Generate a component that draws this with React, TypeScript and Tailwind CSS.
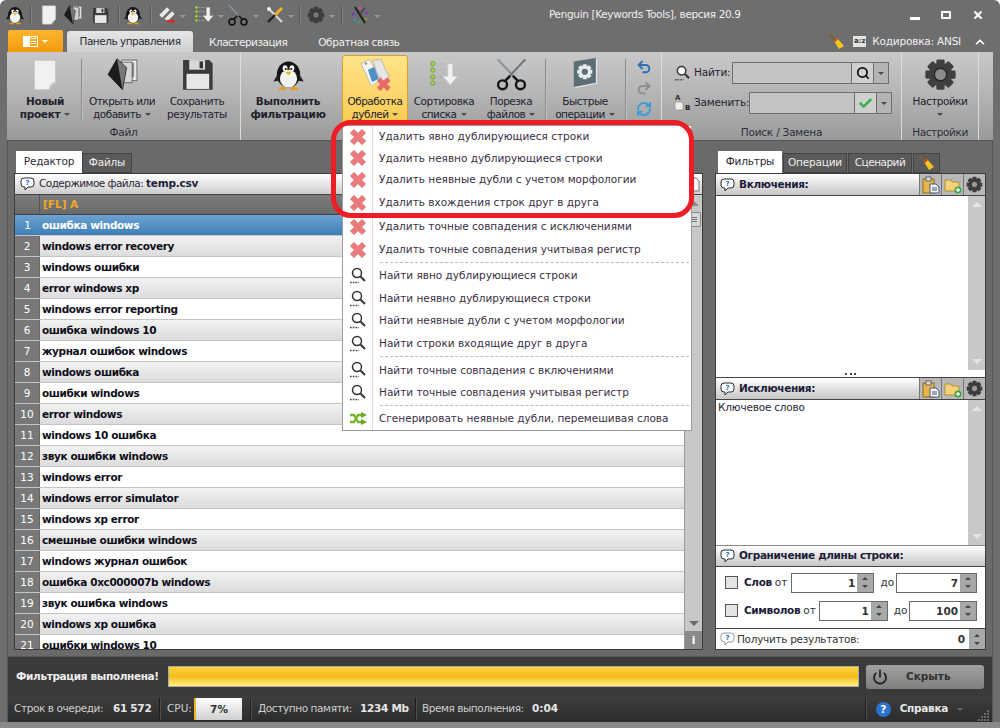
import { Check, ChevronUp, Power, Redo2, RefreshCw, Search, Undo2, X } from "lucide-react";

const rows = [
  "ошибка windows", "windows error recovery", "windows ошибки", "error windows xp", "windows error reporting",
  "ошибка windows 10", "журнал ошибок windows", "windows ошибка", "ошибки windows", "error windows",
  "windows 10 ошибка", "звук ошибки windows", "windows error", "windows error simulator", "windows xp error",
  "смешные ошибки windows", "windows журнал ошибок", "ошибка 0xc000007b windows", "звук ошибка windows",
  "windows xp ошибка", "ошибки windows 10",
];

const Caret = ({ color = "border-t-[#4a4a4a]" }: { color?: string }) => (
  <span className={`inline-block w-0 h-0 border-x-[3px] border-t-[3px] border-x-transparent ${color}`} />
);

const Penguin = ({ size = 48 }: { size?: number }) => (
  <svg width={size} height={size} viewBox="0 0 48 48">
    <ellipse cx="24" cy="24" rx="17" ry="19" fill="#141414" />
    <path d="M8 24 L2 34 L10 33Z M40 24 L46 34 L38 33Z" fill="#222" />
    <ellipse cx="24" cy="30" rx="12.5" ry="13" fill="#f2f2ee" />
    <ellipse cx="19" cy="15" rx="3.5" ry="4.5" fill="#fff" />
    <ellipse cx="29" cy="15" rx="3.5" ry="4.5" fill="#fff" />
    <circle cx="20" cy="16" r="1.5" fill="#111" />
    <circle cx="28" cy="16" r="1.5" fill="#111" />
    <path d="M19 20 L29 20 L24 25Z" fill="#f2b01e" />
    <path d="M10 44 Q15 40 21 44 L21 46 L10 46Z M27 44 Q33 40 38 44 L38 46 L27 46Z" fill="#ef9a14" />
  </svg>
);

const DocIcon = ({ size = 48 }: { size?: number }) => (
  <svg width={size} height={size} viewBox="0 0 48 48">
    <path d="M8 2 H38 Q40 2 40 4 V34 L30 46 H10 Q8 46 8 44Z" fill="#f1f1f1" stroke="#bdbdbd" />
    <path d="M40 34 L30 46 Q30 36 40 34Z" fill="#c9c9c9" />
  </svg>
);

const OpenIcon = ({ size = 48 }: { size?: number }) => (
  <svg width={size} height={size} viewBox="0 0 48 48">
    <rect x="23" y="3" width="22" height="30" fill="#e8e8e8" stroke="#444" />
    <rect x="27" y="7" width="14" height="21" fill="#8f8f8f" />
    <rect x="16" y="6" width="22" height="30" fill="#d4d4d4" stroke="#444" />
    <path d="M16 1 L30 14 L24 46 L3 24Z" fill="#787878" stroke="#111" />
    <path d="M16 1 L24 46 L3 24Z" fill="#1c1c1c" />
  </svg>
);

const FloppyIcon = ({ size = 48 }: { size?: number }) => (
  <svg width={size} height={size} viewBox="0 0 48 48">
    <path d="M3 3 H41 L46 8 V46 H3Z" fill="#3b3b3b" />
    <rect x="12" y="3" width="23" height="14" fill="#d9d9d9" />
    <rect x="27" y="5" width="5" height="10" fill="#333" />
    <rect x="8" y="23" width="33" height="22" fill="#e8e8e8" />
  </svg>
);

const TagsIcon = ({ size = 48 }: { size?: number }) => (
  <svg width={size} height={size} viewBox="0 0 48 48">
    <path d="M20 3 L32 2 L44 28 L30 36Z" fill="#e6e6e6" stroke="#a8a8a8" />
    <path d="M3 8 L15 2 L32 31 L18 41Z" fill="#f5f5f5" stroke="#a8a8a8" />
    <circle cx="10" cy="8" r="2" fill="#999" />
    <path d="M13 17 L22 13 L29 30 L19 35Z" fill="#4e8fc7" />
    <path d="M26 33 L31 28 L36 33 L41 28 L46 33 L41 38 L46 43 L41 48 L36 43 L31 48 L26 43 L31 38Z" fill="#e8696b" />
  </svg>
);

const TagsMinus = ({ size = 18 }: { size?: number }) => (
  <svg width={size} height={size} viewBox="0 0 18 18">
    <path d="M1 9 L9 1 L12 4 L4 12Z M6 13 L14 5 L17 8 L10 15Z" fill="#e9e9e9" stroke="#777" strokeWidth="0.6" />
    <rect x="9" y="14" width="8" height="2.5" fill="#d8282c" />
  </svg>
);

const SortIcon = ({ size = 48 }: { size?: number }) => (
  <svg width={size} height={size} viewBox="0 0 48 48">
    {[6, 16, 27, 37].map((y) => (
      <g key={y}>
        <circle cx="6" cy={y} r="3.5" fill="#a6ce4f" stroke="#5f8a25" />
        <path d={`M12 ${y} H26`} stroke="#b0b0b0" strokeWidth="2" strokeDasharray="3 2" />
      </g>
    ))}
    <path d="M30 6 H38 V26 H46 L34 40 L22 26 H30Z" fill="#f2f2f2" stroke="#c2c2c2" />
  </svg>
);

const ScissorsIcon = ({ size = 48 }: { size?: number }) => (
  <svg width={size} height={size} viewBox="0 0 48 48">
    <path d="M4 2 L32 32" stroke="#8a949c" strokeWidth="3" />
    <path d="M44 2 L16 32" stroke="#6c757c" strokeWidth="3" />
    <circle cx="11" cy="39" r="6.5" fill="none" stroke="#141414" strokeWidth="3.5" />
    <circle cx="37" cy="39" r="6.5" fill="none" stroke="#141414" strokeWidth="3.5" />
    <path d="M15 33 L22 26 M33 33 L26 26" stroke="#141414" strokeWidth="3.5" />
  </svg>
);

const ToolsIcon = ({ size = 18 }: { size?: number }) => (
  <svg width={size} height={size} viewBox="0 0 18 18">
    <path d="M2 2 L16 16" stroke="#d9d9d9" strokeWidth="2" />
    <path d="M16 2 L9 9" stroke="#f0b429" strokeWidth="3" />
    <path d="M9 9 L2 16" stroke="#222" strokeWidth="2.4" />
    <circle cx="3" cy="3" r="2" fill="#eee" />
  </svg>
);

const ColorIcon = ({ size = 20 }: { size?: number }) => (
  <svg width={size} height={size} viewBox="0 0 20 20">
    <path d="M5 2 L15 18" stroke="#222" strokeWidth="2.2" />
    <path d="M10 9 L15 3" stroke="#444" strokeWidth="1.6" />
    {[["3", "9", "#6b3fb5"], ["5", "15", "#3f8ad9"], ["10", "3", "#d04ab0"], ["17", "8", "#7a3db5"], ["16", "14", "#8a8a3a"], ["9", "17", "#3aa84a"]].map(([x, y, c]) => (
      <circle key={c} cx={x} cy={y} r="1.5" fill={c} />
    ))}
  </svg>
);

const GearShape = ({ size = 48, fill = "#4a4a4a", hole = "#a8a8a8" }: { size?: number; fill?: string; hole?: string }) => (
  <svg width={size} height={size} viewBox="0 0 48 48">
    <g fill={fill}>
      {[0, 45, 90, 135, 180, 225, 270, 315].map((a) => (
        <rect key={a} x="18" y="2" width="12" height="12" rx="2" transform={`rotate(${a} 24 24)`} />
      ))}
      <circle cx="24" cy="24" r="17" />
    </g>
    <circle cx="24" cy="24" r="9" fill={hole} stroke="#222" strokeWidth="2" />
  </svg>
);

const BookIcon = ({ size = 48 }: { size?: number }) => (
  <svg width={size} height={size} viewBox="0 0 48 48">
    <path d="M9 6 L41 1 V37 L9 44Z" fill="#e4e4e4" />
    <path d="M7 5 L39 0 V36 L7 42Z" fill="#5b6d75" />
    <g transform="translate(11 8) scale(0.5)">
      <g fill="#e8ecee">
        {[0, 45, 90, 135, 180, 225, 270, 315].map((a) => (
          <rect key={a} x="18" y="2" width="12" height="12" rx="2" transform={`rotate(${a} 24 24)`} />
        ))}
        <circle cx="24" cy="24" r="17" />
      </g>
      <circle cx="24" cy="24" r="9" fill="#5b6d75" />
    </g>
  </svg>
);

const BigX = () => (
  <svg width="18" height="18" viewBox="0 0 18 18">
    <path d="M1 5 L5 1 L9 5 L13 1 L17 5 L13 9 L17 13 L13 17 L9 13 L5 17 L1 13 L5 9Z" fill="#ea7a7b" stroke="#dcb0b0" strokeWidth="0.6" />
  </svg>
);

const Magnifier = ({ size = 18 }: { size?: number }) => (
  <svg width={size} height={size} viewBox="0 0 18 18">
    <circle cx="8" cy="6" r="4.5" fill="#fff" stroke="#333" strokeWidth="1.5" />
    <path d="M11.5 9.5 L16 14" stroke="#333" strokeWidth="2" />
    <path d="M1 15.5 H10" stroke="#444" strokeWidth="1.6" strokeDasharray="1.6 1.2" />
  </svg>
);

const ReplaceIcon = () => (
  <svg width="18" height="20" viewBox="0 0 18 20">
    <text x="2" y="7" fontSize="7" fontWeight="700" fill="#333">A</text>
    <rect x="2" y="9" width="8" height="8" rx="2" fill="#f0f0f0" stroke="#888" strokeWidth="0.6" />
    <text x="12" y="17" fontSize="7" fontWeight="700" fill="#222">B</text>
  </svg>
);

const ShuffleIcon = () => (
  <svg width="18" height="14" viewBox="0 0 18 14">
    <path d="M1 3 H5 L9 10 H12" fill="none" stroke="#7db52d" strokeWidth="2.4" />
    <path d="M1 10 H5 L9 3 H12" fill="none" stroke="#7db52d" strokeWidth="2.4" />
    <path d="M12 0 L18 3 L12 6Z M12 7 L18 10 L12 13Z" fill="#6ea524" />
  </svg>
);

const Bubble = ({ faded = false }: { faded?: boolean }) => (
  <svg width="15" height="14" viewBox="0 0 15 14">
    <path d="M4 1 H11 Q14 1 14 4 V7 Q14 10 11 10 H8 L5 13 V10 H4 Q1 10 1 7 V4 Q1 1 4 1Z" fill="#fff" stroke={faded ? "#999" : "#2c2c2c"} />
    <text x="7.5" y="8" fontSize="7" textAnchor="middle" fill="#1e6fd0" fontWeight="700">?</text>
  </svg>
);

const ClipIcon = () => (
  <svg width="18" height="18" viewBox="0 0 18 18">
    <rect x="1" y="3" width="11" height="14" fill="#e6b54c" stroke="#8f6a1d" />
    <rect x="4" y="1" width="5" height="4" fill="#ddd" stroke="#666" />
    <path d="M8 8 H14 L17 11 V17 H8Z" fill="#f5f5f5" stroke="#44557a" />
    <path d="M10 12 H15 M10 14 H15" stroke="#44557a" />
  </svg>
);

const FolderPlus = () => (
  <svg width="18" height="18" viewBox="0 0 18 18">
    <path d="M1 4 H7 L8 6 H15 V15 H1Z" fill="#f3d37a" stroke="#b48f35" />
    <circle cx="14" cy="14" r="3.5" fill="#39a83a" />
    <path d="M14 12 V16 M12 14 H16" stroke="#fff" strokeWidth="1.3" />
  </svg>
);

const Broom = () => (
  <svg width="16" height="16" viewBox="0 0 16 16">
    <path d="M1 1 L6 6" stroke="#8a5a2a" strokeWidth="2" />
    <path d="M5 7 L8 4 L15 12 L10 15Z" fill="#f3c51f" />
    <path d="M5 7 L8 4 L9 5 L6 8Z" fill="#c8352a" />
  </svg>
);

const SizeGrip = () => (
  <svg width="14" height="12" viewBox="0 0 14 12">
    {[[11, 1], [8, 4], [11, 4], [5, 7], [8, 7], [11, 7], [2, 10], [5, 10], [8, 10], [11, 10]].map(([x, y]) => (
      <rect key={`${x}-${y}`} x={x} y={y} width="2" height="2" fill="#6a6a6a" />
    ))}
  </svg>
);

const Checkbox = () => (
  <span className="w-[13px] h-[13px] border-[1px] border-[#555] bg-[#e4e4e4] shrink-0" />
);

const Spinner = () => (
  <span className="w-[16px] h-full flex flex-col items-center justify-center gap-[5px] shrink-0 bg-[#a8a8a8]">
    <span className="w-0 h-0 border-x-[3px] border-b-[3px] border-x-transparent border-b-[#444]" />
    <span className="w-0 h-0 border-x-[3px] border-t-[3px] border-x-transparent border-t-[#444]" />
  </span>
);

const SpinBox = ({ value, width }: { value: string; width: string }) => (
  <span className={`flex h-[20px] border border-[#6a6a6a] bg-white ${width}`}>
    <span className="flex-1 text-right pr-[2px] font-bold text-[#333] leading-[18px]">{value}</span>
    <Spinner />
  </span>
);

const RibbonButton = ({ icon, lines, width, bold = false, caret = false, active = false }: {
  icon: React.ReactNode; lines: string[]; width: string; bold?: boolean; caret?: boolean; active?: boolean;
}) => (
  <div className={`${width} shrink-0 flex flex-col items-center ${active ? "mt-[3px] pt-[2px] h-[74px] bg-linear-to-b from-[#ffe487] to-[#f9c94e] border border-[#d5a02c] rounded-t-[3px]" : "pt-[6px] h-full"}`}>
    <div className="h-[33px] flex items-center justify-center">{icon}</div>
    <div className={`mt-[4px] text-center leading-[13px] text-[#22222e] ${bold ? "font-bold tracking-[-0.3px]" : "tracking-[-0.5px]"}`}>
      <div className="whitespace-nowrap">{lines[0]}</div>
      <div className="whitespace-nowrap flex items-center justify-center gap-[4px]">{lines[1]}{caret && <Caret />}</div>
    </div>
  </div>
);

const Sep = ({ ml = "" }: { ml?: string }) => <div className={`w-[2px] h-[60px] mt-[7px] bg-[#8c8c8c] border-r border-[#c2c2c2] shrink-0 ${ml}`} />;

const GroupLabel = ({ children, tight = false }: { children: React.ReactNode; tight?: boolean }) => (
  <div className={`h-[17px] pt-px text-center text-[#2d2d38] leading-[17px] ${tight ? "tracking-[-0.4px]" : "tracking-[-0.2px]"}`}>{children}</div>
);

const QuickArrow = () => <span className="ml-[4px]"><Caret color="border-t-[#9a9a9a]" /></span>;

const QuickSep = ({ ml }: { ml: string }) => <div className={`w-[2px] h-[18px] bg-[#585858] border-r border-[#848484] shrink-0 ${ml}`} />;

const TitleBar = () => (
  <div className="h-[30px] flex items-center pl-[5px] shrink-0">
    <Penguin size={20} />
    <QuickSep ml="ml-[5px]" />
    <span className="ml-[7px]"><DocIcon size={20} /></span>
    <span className="ml-[4px]"><OpenIcon size={20} /></span>
    <span className="ml-[9px]"><FloppyIcon size={17} /></span>
    <QuickSep ml="ml-[9px]" />
    <span className="ml-[3px]"><Penguin size={20} /></span>
    <QuickSep ml="ml-[7px]" />
    <span className="ml-[6px]"><TagsMinus size={18} /></span><QuickArrow />
    <span className="ml-[8px]"><SortIcon size={20} /></span><QuickArrow />
    <span className="ml-[3px]"><ScissorsIcon size={22} /></span><QuickArrow />
    <span className="ml-[7px]"><ToolsIcon size={18} /></span><QuickArrow />
    <QuickSep ml="ml-[5px]" />
    <span className="ml-[6px]"><GearShape size={18} fill="#3e3e3e" hole="#777" /></span><QuickArrow />
    <QuickSep ml="ml-[6px]" />
    <span className="ml-[7px]"><ColorIcon size={20} /></span><QuickArrow />
    <span className="ml-[169px] text-[#eeeeee] whitespace-nowrap tracking-[-0.35px]">Penguin [Keywords Tools], версия 20.9</span>
    <div className="ml-auto flex items-center gap-[21px] pr-[16px] text-white">
      <span className="w-[10px] h-[3px] mt-[7px] bg-white" />
      <span className="w-[10px] h-[8px] border-2 border-white" />
      <X size={12} strokeWidth={4} />
    </div>
  </div>
);

const TabBar = () => (
  <div className="h-[22px] flex items-end pl-[8px] shrink-0 text-[#f0f0f0]">
    <div className="w-[55px] h-[22px] rounded-t-[2px] bg-linear-to-b from-[#ffb52e] to-[#f29a0c] flex items-center justify-center gap-[4px]">
      <span className="w-[15px] h-[11px] border border-white flex">
        <span className="w-[6px] h-full bg-white" />
        <span className="flex-1 flex flex-col justify-evenly pl-[1px] pr-[1px]">
          <span className="h-px bg-white" /><span className="h-px bg-white" /><span className="h-px bg-white" />
        </span>
      </span>
      <Caret color="border-t-white" />
    </div>
    <div className="ml-[4px] w-[126px] h-[21px] pt-px rounded-t-[3px] bg-linear-to-b from-[#e6e6e6] to-[#cfcfcf] text-[#2a2a35] flex items-center justify-center tracking-[-0.5px]">Панель управления</div>
    <span className="ml-[16px] h-[21px] leading-[22px] tracking-[-0.5px]">Кластеризация</span>
    <span className="ml-[31px] h-[21px] leading-[22px] tracking-[-0.4px]">Обратная связь</span>
    <div className="ml-auto flex items-center h-[21px] pr-[13px]">
      <Broom />
      <span className="ml-[8px] w-[13px] h-[11px] bg-[#e4e4e4] text-[7px] text-[#333] leading-[11px] text-center font-bold">a:z</span>
      <span className="ml-[6px] tracking-[-0.2px]">Кодировка: ANSI</span>
      <ChevronUp size={14} strokeWidth={3} className="ml-[12px] text-white" />
    </div>
  </div>
);

const SearchBox = ({ label, icon, inputW, btn }: { label: string; icon: React.ReactNode; inputW: string; btn: React.ReactNode }) => (
  <div className="flex items-center h-[22px]">
    <span className="w-[18px] flex justify-center">{icon}</span>
    <span className="ml-[3px] text-[#22222e] flex-1 whitespace-nowrap tracking-[-0.2px]">{label}</span>
    <span className="flex h-[22px] border border-[#6f6f6f]">
      <span className={`${inputW} bg-[#c4c4c4]`} />
      <span className="w-[22px] border-l border-[#6f6f6f] bg-[#cfcfcf] flex items-center justify-center">{btn}</span>
      <span className="w-[15px] border-l border-[#6f6f6f] bg-[#b4b4b4] flex items-center justify-center"><Caret /></span>
    </span>
  </div>
);

const Ribbon = () => (
  <div className="h-[89px] mx-[7px] flex shrink-0 bg-linear-to-b from-[#c8c8c8] via-[#b4b4b4] to-[#9a9a9a] border-b border-[#555] relative">
    {/* Файл */}
    <div className="w-[234px] shrink-0 flex flex-col border-r border-[#dcdcdc]">
      <div className="flex-1 min-h-0 flex pl-[2px]">
        <RibbonButton width="w-[72px]" lines={["Новый", "проект"]} bold caret icon={<DocIcon size={32} />} />
        <Sep />
        <RibbonButton width="w-[78px]" lines={["Открыть или", "добавить"]} caret icon={<OpenIcon size={33} />} />
        <RibbonButton width="w-[72px]" lines={["Сохранить", "результаты"]} icon={<FloppyIcon size={33} />} />
      </div>
      <GroupLabel>Файл</GroupLabel>
    </div>
    {/* Выполнить */}
    <div className="w-[94px] shrink-0 flex">
      <RibbonButton width="w-[94px]" lines={["Выполнить", "фильтрацию"]} bold icon={<Penguin size={33} />} />
    </div>
    <div className="flex pl-[7px] w-[327px] shrink-0 border-r border-[#dcdcdc]">
      <RibbonButton width="w-[66px]" active lines={["Обработка", "дублей"]} caret icon={<TagsIcon size={33} />} />
      <RibbonButton width="w-[72px]" lines={["Сортировка", "списка"]} caret icon={<SortIcon size={30} />} />
      <RibbonButton width="w-[62px]" lines={["Порезка", "файлов"]} caret icon={<ScissorsIcon size={33} />} />
      <Sep ml="ml-[3px]" />
      <RibbonButton width="w-[76px]" lines={["Быстрые", "операции"]} caret icon={<BookIcon size={33} />} />
      <Sep ml="ml-[2px]" />
      <div className="flex-1 flex flex-col items-center pt-[7px] gap-[5px]">
        <Undo2 size={16} strokeWidth={3} className="text-[#2f6fb3]" />
        <Redo2 size={16} strokeWidth={3} className="text-[#8e8e8e]" />
        <RefreshCw size={16} strokeWidth={3} className="text-[#3d9ad9]" />
      </div>
    </div>
    {/* Поиск */}
    <div className="w-[240px] shrink-0 flex flex-col border-r border-[#dcdcdc]">
      <div className="flex-1 min-h-0 flex flex-col gap-[8px] pt-[10px] pl-[11px] pr-[12px]">
        <SearchBox label="Найти:" inputW="w-[118px]" icon={<Magnifier size={17} />} btn={<Search size={14} strokeWidth={3} className="text-[#111]" />} />
        <SearchBox label="Заменить:" inputW="w-[104px]" icon={<ReplaceIcon />} btn={<Check size={15} strokeWidth={4} className="text-[#3cb04a]" />} />
      </div>
      <GroupLabel>Поиск / Замена</GroupLabel>
    </div>
    {/* Настройки */}
    <div className="w-[77px] shrink-0 flex flex-col border-r border-[#dcdcdc]">
      <div className="flex-1 min-h-0 flex flex-col items-center pt-[6px]">
        <GearShape size={33} fill="#3f3f3f" hole="#8a8a8a" />
        <span className="mt-[4px] leading-[13px] text-[#22222e] tracking-[-0.5px]">Настройки</span>
        <span className="mt-[5px] flex"><Caret /></span>
      </div>
      <GroupLabel tight>Настройки</GroupLabel>
    </div>
  </div>
);

const Editor = () => (
  <div className="w-[689px] shrink-0 flex flex-col">
    <div className="h-[22px] flex items-end pl-[2px]">
      <span className="w-[66px] h-[22px] bg-white text-[#2a2a35] flex items-center justify-center tracking-[-0.2px]">Редактор</span>
      <span className="w-[50px] h-[20px] bg-[#5a5a5a] border border-[#444] text-[#eee] flex items-center justify-center tracking-[-0.2px]">Файлы</span>
    </div>
    <div className="flex-1 min-h-0 flex flex-col border border-[#3c3c3c] bg-white">
      <div className="h-[21px] shrink-0 flex items-center pl-[5px] pr-[2px] gap-[4px] bg-linear-to-b from-white to-[#cdcdcd] border-b border-[#444] text-[#2a2a35]">
        <Bubble />
        <span className="flex-1 tracking-[-0.55px]">Содержимое файла: <b className="text-[#1d1d3a] tracking-[-0.2px]">temp.csv</b></span>
        <svg width="11" height="15" viewBox="0 0 11 15"><path d="M1 1 H7 L10 4 V14 H1Z" fill="#f5f5f5" stroke="#777" /></svg>
      </div>
      <div className="flex-1 min-h-0 flex">
        <div className="flex-1 min-w-0 flex flex-col overflow-hidden">
          <div className="h-[20px] shrink-0 flex bg-linear-to-b from-[#7c7c7c] to-[#6a6a6a] border-b border-[#444]">
            <span className="w-[25px] border-r border-[#555]" />
            <span className="pl-[3px] font-bold text-[#f5a623] leading-[19px]">[FL] A</span>
          </div>
          {rows.map((text, i) => {
            const selected = i === 0;
            const striped = i % 2 === 1;
            return (
              <div
                key={text}
                className={`h-[21px] shrink-0 flex border-b border-[#c4c4c4] ${selected ? "bg-linear-to-b from-[#6ba3d2] to-[#3f7fb5]" : striped ? "bg-linear-to-b from-[#f2f2f2] to-[#dcdcdc]" : "bg-white"}`}
              >
                <span className={`w-[25px] shrink-0 text-center text-white leading-[20px] ${selected ? "" : "bg-[#787878] border-r border-[#666]"}`}>{i + 1}</span>
                <span className={`pl-[2px] font-bold tracking-[-0.38px] leading-[20px] ${selected ? "text-white" : "text-[#0e0e1a]"}`}>{text}</span>
              </div>
            );
          })}
        </div>
        <div className="w-[18px] shrink-0 flex flex-col items-center bg-[#c8c8c8] border-l border-[#999] relative">
          <span className="mt-[6px] w-0 h-0 border-x-[5px] border-b-[5px] border-x-transparent border-b-[#8a8a8a]" />
          <span className="mt-[6px] w-[15px] h-[15px] bg-[#d8d8d8] border border-[#8a8a8a] rounded-[2px] flex flex-col justify-center gap-px px-[3px]">
            <span className="h-px bg-[#777]" /><span className="h-px bg-[#777]" /><span className="h-px bg-[#777]" />
          </span>
          <span className="mt-auto mb-[5px] w-0 h-0 border-x-[5px] border-t-[5px] border-x-transparent border-t-[#6a6a6a]" />
          <span className="w-full h-[18px] bg-[#8a8a8a] text-white font-bold text-center leading-[18px]">i</span>
        </div>
      </div>
    </div>
  </div>
);

const SectionHeader = ({ title, tools = false, extraClass = "" }: { title: string; tools?: boolean; extraClass?: string }) => (
  <div className={`h-[22px] shrink-0 flex items-center pl-[4px] gap-[4px] bg-linear-to-b from-white to-[#c6c6c6] border-b border-[#444] ${extraClass}`}>
    <Bubble />
    <b className="text-[#1d1d3a] flex-1 whitespace-nowrap tracking-[-0.35px]">{title}</b>
    {tools && (
      <span className="flex h-full">
        <span className="w-[22px] bg-[#b8b8b8] border-l border-[#777] flex items-center justify-center"><ClipIcon /></span>
        <span className="w-[22px] bg-[#b8b8b8] border-l border-[#777] flex items-center justify-center"><FolderPlus /></span>
        <span className="w-[22px] bg-[#b8b8b8] border-l border-[#777] flex items-center justify-center"><GearShape size={17} fill="#3c3c3c" hole="#999" /></span>
      </span>
    )}
  </div>
);

const ListBox = ({ height, text }: { height: string; text?: string }) => (
  <div className={`${height} shrink-0 flex`}>
    <div className="flex-1 pl-[2px] text-[#2a2a35] leading-[14px] tracking-[-0.2px]">{text}</div>
    <div className="w-[17px] bg-[#c8c8c8] flex flex-col items-center justify-between py-[6px]">
      <span className="w-0 h-0 border-x-[5px] border-b-[5px] border-x-transparent border-b-[#e4e4e4]" />
      <span className="w-0 h-0 border-x-[5px] border-t-[5px] border-x-transparent border-t-[#e4e4e4]" />
    </div>
  </div>
);

const SidePanel = () => (
  <div className="w-[271px] shrink-0 flex flex-col">
    <div className="h-[22px] flex items-end text-[#eee] gap-px">
      <span className="ml-[3px] w-[64px] h-[22px] bg-white text-[#2a2a35] flex items-center justify-center tracking-[-0.2px]">Фильтры</span>
      <span className="w-[64px] h-[20px] bg-[#5a5a5a] border border-[#444] flex items-center justify-center tracking-[-0.2px]">Операции</span>
      <span className="w-[64px] h-[20px] bg-[#5a5a5a] border border-[#444] flex items-center justify-center tracking-[-0.5px]">Сценарий</span>
      <span className="w-[27px] h-[20px] bg-[#5a5a5a] border border-[#444] flex items-center justify-center"><Broom /></span>
    </div>
    <div className="flex-1 min-h-0 flex flex-col border border-[#3c3c3c] bg-white">
      <SectionHeader title="Включения:" tools />
      <ListBox height="h-[174px]" />
      <div className="h-[8px] shrink-0 border-b border-[#444] flex items-center justify-center">
        <span className="w-[11px] border-t-2 border-dotted border-[#444]" />
      </div>
      <SectionHeader title="Исключения:" tools />
      <ListBox height="h-[145px]" text="Ключевое слово" />
      <SectionHeader title="Ограничение длины строки:" extraClass="border-t border-t-[#888]" />
      <div className="flex-1 flex flex-col justify-center gap-[8px] pb-[2px] pl-[9px] pr-[8px] text-[#333]">
        <div className="flex items-center h-[20px]">
          <Checkbox />
          <b className="ml-[6px] text-[#1d1d3a] tracking-[-0.35px]">Слов</b>
          <span className="ml-[3px]">от</span>
          <span className="ml-[4px]"><SpinBox value="1" width="w-[83px]" /></span>
          <span className="ml-[6px] w-[16px]">до</span>
          <SpinBox value="7" width="w-[83px]" />
        </div>
        <div className="flex items-center h-[20px]">
          <Checkbox />
          <b className="ml-[6px] text-[#1d1d3a] tracking-[-0.35px]">Символов</b>
          <span className="ml-[3px]">от</span>
          <span className="ml-[3px]"><SpinBox value="1" width="w-[69px]" /></span>
          <span className="ml-[6px] w-[16px]">до</span>
          <SpinBox value="100" width="w-[69px]" />
        </div>
      </div>
      <div className="h-[21px] shrink-0 flex items-center pl-[4px] gap-[2px] border-t border-[#444] text-[#333]">
        <Bubble faded />
        <span className="flex-1 pt-px tracking-[-0.3px]">Получить результатов:</span>
        <b className="pr-[2px] pt-px">0</b>
        <Spinner />
      </div>
    </div>
  </div>
);

const StatusSepBox = () => (
  <span className="block w-[2px] h-[22px] bg-[#1e1e1e] border-r border-[#4c4c4c]" />
);

const StatusBar = () => (
  <div className="h-[26px] flex items-center shrink-0 bg-linear-to-b from-[#3e3e3e] to-[#2c2c2c] text-[#cfcfcf] pl-[6px] whitespace-nowrap">
    <span className="w-[88px] tracking-[-0.4px]">Строк в очереди:</span>
    <b className="ml-[11px] w-[40px] text-[#e6e6e6] tracking-[-0.3px]">61 572</b>
    <span className="ml-[6px]"><StatusSepBox /></span>
    <span className="ml-[6px] w-[25px]">CPU:</span>
    <b className="ml-[2px] w-[48px] h-[22px] bg-linear-to-b from-white to-[#d0d0d0] text-[#333] text-center leading-[22px] border-l-2 border-[#e6b52a]">7%</b>
    <span className="ml-[8px]"><StatusSepBox /></span>
    <span className="ml-[6px] w-[91px] tracking-[-0.4px]">Доступно памяти:</span>
    <b className="ml-[11px] w-[48px] text-[#e6e6e6] tracking-[-0.3px]">1234 Mb</b>
    <span className="ml-[7px]"><StatusSepBox /></span>
    <span className="ml-[5px] w-[99px] tracking-[-0.45px]">Время выполнения:</span>
    <b className="ml-[11px] text-[#e6e6e6]">0:04</b>
    <span className="ml-auto"><StatusSepBox /></span>
    <span className="ml-[9px] w-[15px] h-[15px] rounded-full bg-[#2a73d2] text-white font-bold text-center leading-[15px]">?</span>
    <b className="ml-[9px] text-[#e6e6e6] tracking-[-0.3px]">Справка</b>
    <span className="ml-[9px] flex"><Caret color="border-t-[#666]" /></span>
    <span className="ml-[13px] mr-[2px] self-end mb-[1px]"><SizeGrip /></span>
  </div>
);

const DupMenu = () => {
  const Item = ({ icon, text, h, mt = "" }: { icon: React.ReactNode; text: string; h: string; mt?: string }) => (
    <div className={`flex items-center ${h} ${mt}`}>
      <span className="w-[30px] flex justify-center shrink-0">{icon}</span>
      <span className="ml-[6px] whitespace-nowrap text-[#3a2f45]">{text}</span>
    </div>
  );
  const Divider = () => <div className="ml-[37px] mr-[2px] h-[2px] my-px border-t border-dashed border-[#bcbcbc]" />;
  return (
    <div className="absolute left-[342px] top-[125px] w-[350px] h-[306px] bg-white border border-[#9c9c9c] flex flex-col">
      <div className="absolute left-[29px] top-0 bottom-0 w-px bg-[#dcdcdc]" />
      <Item h="h-[22px]" icon={<BigX />} text="Удалить явно дублирующиеся строки" />
      <Item h="h-[22px]" icon={<BigX />} text="Удалить неявно дублирующиеся строки" />
      <Item h="h-[22px]" icon={<BigX />} text="Удалить неявные дубли с учетом морфологии" />
      <Item h="h-[22px]" mt="mt-px" icon={<BigX />} text="Удалить вхождения строк друг в друга" />
      <Item h="h-[22px]" mt="mt-[3px]" icon={<BigX />} text="Удалить точные совпадения с исключениями" />
      <Item h="h-[22px]" mt="mt-px" icon={<BigX />} text="Удалить точные совпадения учитывая регистр" />
      <Divider />
      <Item h="h-[23px]" icon={<Magnifier />} text="Найти явно дублирующиеся строки" />
      <Item h="h-[23px]" icon={<Magnifier />} text="Найти неявно дублирующиеся строки" />
      <Item h="h-[23px]" icon={<Magnifier />} text="Найти неявные дубли с учетом морфологии" />
      <Item h="h-[23px]" icon={<Magnifier />} text="Найти строки входящие друг в друга" />
      <Divider />
      <Item h="h-[23px]" icon={<Magnifier />} text="Найти точные совпадения с включениями" />
      <Item h="h-[23px]" icon={<Magnifier />} text="Найти точные совпадения учитывая регистр" />
      <Divider />
      <Item h="h-[22px]" icon={<ShuffleIcon />} text="Сгенерировать неявные дубли, перемешивая слова" />
    </div>
  );
};

export default function App() {
  return (
    <div className="w-[1000px] h-[728px] relative overflow-hidden flex flex-col rounded-t-[6px] bg-[#6e6e6e] font-['DejaVu_Sans',sans-serif] text-[10.5px] select-none">
      <TitleBar />
      <TabBar />
      <Ribbon />
      <div className="flex-1 min-h-0 mx-[7px] flex flex-col bg-[#6a6a6a] border-x border-[#555]">
        <div className="flex-1 min-h-0 flex gap-[12px] pl-[6px] pt-[10px] pb-[6px]">
          <Editor />
          <SidePanel />
        </div>
        <div className="h-[40px] shrink-0 border-t border-[#555] bg-[#3a3a3a] flex items-center pl-[8px] pr-[8px]">
          <b className="w-[144px] text-[#eee] whitespace-nowrap tracking-[-0.35px]">Фильтрация выполнена!</b>
          <span className="ml-[8px] w-[691px] h-[21px] border border-[#aaa] bg-linear-to-b from-[#fbd43a] via-[#f2bb18] to-[#fff07a]" />
          <span className="ml-[7px] w-[118px] h-[24px] rounded-[3px] bg-linear-to-b from-[#a0a0a0] to-[#808080] flex items-center">
            <Power size={16} strokeWidth={2.5} className="ml-[6px] text-[#1c1c1c]" />
            <b className="ml-[18px] text-[#333]">Скрыть</b>
          </span>
        </div>
        <StatusBar />
      </div>
      <div className="h-[6px] shrink-0 bg-[#8a8a8a]" />
      <DupMenu />
      {/* красная рамка поверх меню */}
      <div className="absolute left-[331px] top-[120px] w-[363px] h-[98px] border-[5px] border-[#ee1c25] rounded-[20px] pointer-events-none" />
    </div>
  );
}
